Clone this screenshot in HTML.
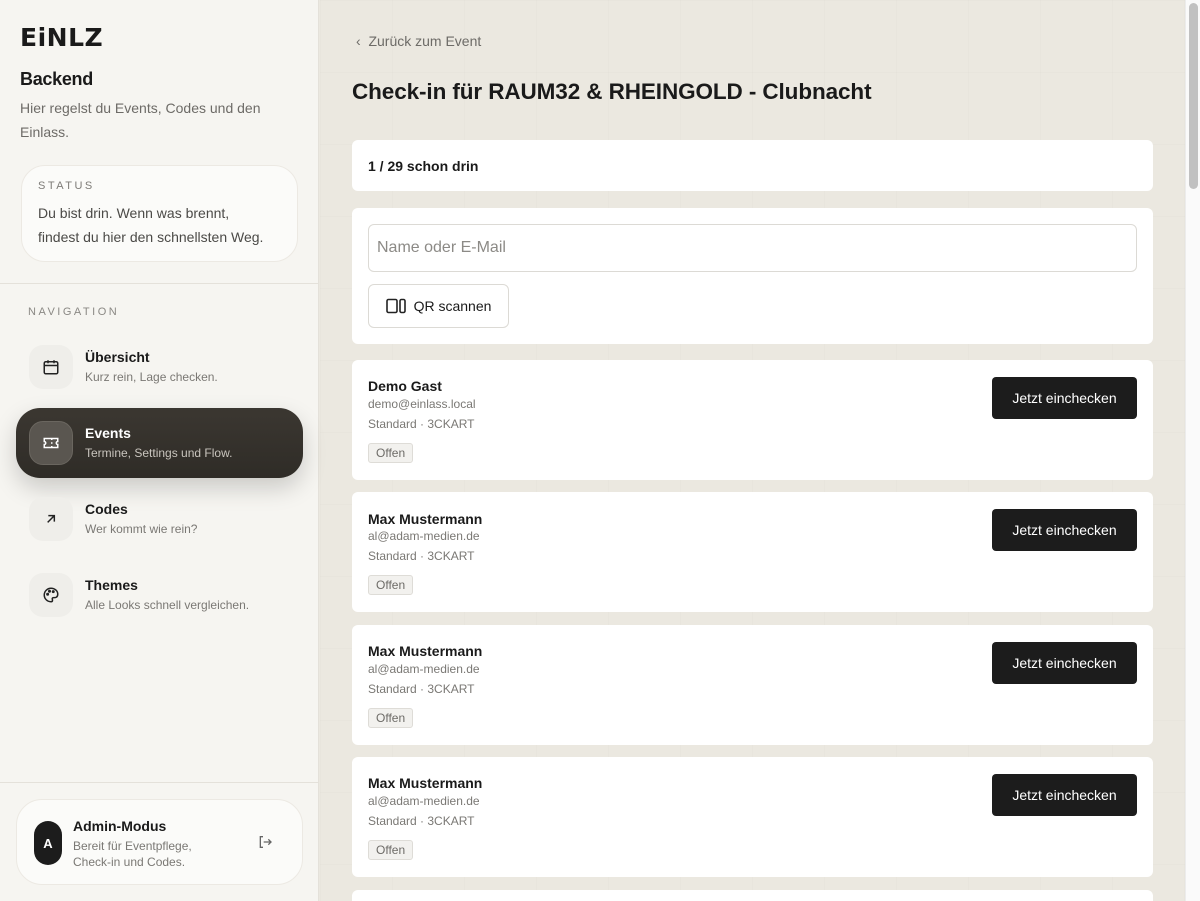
<!DOCTYPE html>
<html><head><meta charset="utf-8"><style>
*{box-sizing:border-box;margin:0;padding:0}
html{overflow:hidden;width:1200px;height:901px}
body{width:1200px;height:901px;overflow:hidden;font-family:"Liberation Sans",sans-serif;background:#ebe8e0;position:relative;color:#1a1a1a}
.side{position:absolute;left:0;top:0;width:319px;height:901px;background:#f6f5f1;border-right:1px solid #e4e1da}
.logo{position:absolute;left:20px;top:24px;font-size:25px;font-weight:900;letter-spacing:0.5px;line-height:28px;font-family:"DejaVu Sans","Liberation Sans",sans-serif}
.h{position:absolute;left:20px;top:69px;font-size:18px;font-weight:bold;letter-spacing:-0.3px}
.sub{position:absolute;left:20px;top:96px;font-size:14px;line-height:24px;color:#6d6b67;width:270px}
.status{position:absolute;left:21px;top:165px;width:277px;height:97px;background:#fbfbf9;border:1px solid #ece9e3;border-radius:24px;padding:14px 30px 14px 16px}
.cap{font-size:11px;letter-spacing:2.5px;color:#7d7b77}
.status p{margin-top:9px;font-size:14px;line-height:24px;color:#4b4a47}
.div{position:absolute;left:0;width:319px;border-top:1px solid #e4e1da}
.navh{position:absolute;left:28px;top:306px;font-size:11px;letter-spacing:2.5px;color:#8a8884}
.item{position:absolute;left:16px;width:287px;height:70px;border-radius:24px}
.item .ic{position:absolute;left:13px;top:13px;width:44px;height:44px;border-radius:14px;background:#efeeea;display:flex;align-items:center;justify-content:center}
.item .t{position:absolute;left:69px;top:17px;font-size:14px;font-weight:bold}
.item .d{position:absolute;left:69px;top:38px;font-size:12px;color:#7a7874}
.item.act{background:linear-gradient(180deg,#3b3731,#2f2c27);box-shadow:0 10px 24px rgba(0,0,0,.18)}
.item.act .ic{background:#5a5650;border:1px solid #6a665f}
.item.act .t{color:#fff}.item.act .d{color:#c9c5be}
.admin{position:absolute;left:16px;top:799px;width:287px;height:86px;background:#fbfbf9;border:1px solid #ece9e3;border-radius:26px}
.av{position:absolute;left:17px;top:21px;width:28px;height:44px;border-radius:14px;background:#1c1c1c;color:#fff;font-size:13px;font-weight:bold;display:flex;align-items:center;justify-content:center}
.main{position:absolute;left:320px;top:0;width:865px;height:901px;background-image:linear-gradient(90deg,rgba(0,0,0,.012) 1px,transparent 1px),linear-gradient(rgba(0,0,0,.012) 1px,transparent 1px);background-size:72px 72px}
.back{position:absolute;left:356px;top:33px;font-size:14px;color:#6d6b67}
.title{position:absolute;left:352px;top:79px;font-size:22.5px;font-weight:bold;letter-spacing:-0.1px}
.card{position:absolute;left:352px;width:801px;background:#fff;border-radius:6px}
.inp{position:absolute;left:16px;top:16px;width:769px;height:48px;border:1px solid #dcdad5;border-radius:6px;font-size:16px;color:#8c8a86;padding:14px 8px}
.qr{position:absolute;left:16px;top:76px;width:141px;height:44px;border:1px solid #dcdad5;border-radius:6px;font-size:14px;display:flex;align-items:center;justify-content:center;gap:8px}
.g .n{position:absolute;left:16px;top:18px;font-size:14px;font-weight:bold}
.g .e{position:absolute;left:16px;top:37px;font-size:12px;color:#7a7874}
.g .s{position:absolute;left:16px;top:57px;font-size:12px;color:#7a7874}
.g .b{position:absolute;left:16px;top:83px;font-size:12px;color:#6d6b67;background:#f2f1ee;border:1px solid #dedcd7;border-radius:3px;padding:2px 7px}
.g .btn{position:absolute;right:16px;top:17px;width:145px;height:42px;background:#1c1c1c;color:#fff;border-radius:4px;font-size:14px;display:flex;align-items:center;justify-content:center}
.sb{position:absolute;left:1185px;top:0;width:15px;height:901px;background:#fafafa;border-left:1px solid #ececec}
.sb i{position:absolute;left:3px;top:3px;width:9px;height:186px;background:#c1c1c1;border-radius:5px}
</style></head><body>
<div class="side">
<div class="logo">EiNLZ</div>
<div class="h">Backend</div>
<div class="sub">Hier regelst du Events, Codes und den Einlass.</div>
<div class="status"><div class="cap">STATUS</div><p>Du bist drin. Wenn was brennt, findest du hier den schnellsten Weg.</p></div>
<div class="div" style="top:283px"></div>
<div class="navh">NAVIGATION</div>
<div class="item" style="top:332px"><div class="ic"><svg width="18" height="18" viewBox="0 0 24 24" fill="none" stroke="#222" stroke-width="2"><rect x="3" y="5" width="18" height="16" rx="2"/><path d="M3 10h18M8 3v4M16 3v4M8 14h.01M12 14h.01M16 14h.01M8 17h.01M12 17h.01M16 17h.01"/></svg></div><div class="t">Übersicht</div><div class="d">Kurz rein, Lage checken.</div></div>
<div class="item act" style="top:408px"><div class="ic"><svg width="18" height="18" viewBox="0 0 24 24" fill="none" stroke="#fff" stroke-width="2"><path d="M3 6h18v4a2 2 0 0 0 0 4v4H3v-4a2 2 0 0 0 0-4z M13 6v2M13 11v2M13 16v2"/></svg></div><div class="t">Events</div><div class="d">Termine, Settings und Flow.</div></div>
<div class="item" style="top:484px"><div class="ic"><svg width="16" height="16" viewBox="0 0 24 24" fill="none" stroke="#222" stroke-width="2.2"><path d="M7 17L17 7M8 7h9v9"/></svg></div><div class="t">Codes</div><div class="d">Wer kommt wie rein?</div></div>
<div class="item" style="top:560px"><div class="ic"><svg width="18" height="18" viewBox="0 0 24 24" fill="none" stroke="#222" stroke-width="2"><path d="M12 3a9 9 0 1 0 0 18c1.5 0 2-1 2-2 0-1.5-1-2 0-3s3 0 5-1 2-3 2-4c0-4.5-4-8-9-8z"/><circle cx="7.5" cy="11" r="1"/><circle cx="10" cy="7" r="1"/><circle cx="15" cy="7.5" r="1"/></svg></div><div class="t">Themes</div><div class="d">Alle Looks schnell vergleichen.</div></div>
<div class="div" style="top:782px"></div>
<div class="admin"><div class="av">A</div>
<div style="position:absolute;left:56px;top:18px;font-size:14px;font-weight:bold">Admin-Modus</div>
<div style="position:absolute;left:56px;top:38px;font-size:12px;line-height:16px;color:#7a7874">Bereit für Eventpflege,<br>Check-in und Codes.</div>
<svg style="position:absolute;left:240px;top:34px" width="16" height="16" viewBox="0 0 24 24" fill="none" stroke="#666" stroke-width="2"><path d="M9 4H5v16h4M10 12h11M17 8l4 4-4 4"/></svg></div>
</div>
<div class="main"></div>
<div class="back">‹&nbsp; Zurück zum Event</div>
<div class="title">Check-in für RAUM32 &amp; RHEINGOLD - Clubnacht</div>
<div class="card" style="top:140px;height:51px"><div style="position:absolute;left:16px;top:18px;font-size:14px;font-weight:bold">1 / 29 schon drin</div></div>
<div class="card" style="top:208px;height:136px"><div class="inp">Name oder E-Mail</div><div class="qr"><svg width="20" height="16" viewBox="0 0 20 16" fill="none" stroke="#222" stroke-width="1.6"><rect x="1" y="1.5" width="10" height="13" rx="1.5"/><rect x="14" y="1.5" width="5" height="13" rx="1.5"/></svg>QR scannen</div></div>
<div class="card g" style="top:360px;height:120px"><div class="n">Demo Gast</div><div class="e">demo@einlass.local</div><div class="s">Standard · 3CKART</div><div class="b">Offen</div><div class="btn">Jetzt einchecken</div></div>
<div class="card g" style="top:492px;height:120px"><div class="n" style="top:19px">Max Mustermann</div><div class="e" style="top:37px">al@adam-medien.de</div><div class="s">Standard · 3CKART</div><div class="b">Offen</div><div class="btn">Jetzt einchecken</div></div>
<div class="card g" style="top:625px;height:120px"><div class="n">Max Mustermann</div><div class="e">al@adam-medien.de</div><div class="s">Standard · 3CKART</div><div class="b">Offen</div><div class="btn">Jetzt einchecken</div></div>
<div class="card g" style="top:757px;height:120px"><div class="n">Max Mustermann</div><div class="e">al@adam-medien.de</div><div class="s">Standard · 3CKART</div><div class="b">Offen</div><div class="btn">Jetzt einchecken</div></div>
<div class="card" style="top:890px;height:11px;border-radius:6px 6px 0 0"></div>
<div class="sb"><i></i></div>
</body></html>
